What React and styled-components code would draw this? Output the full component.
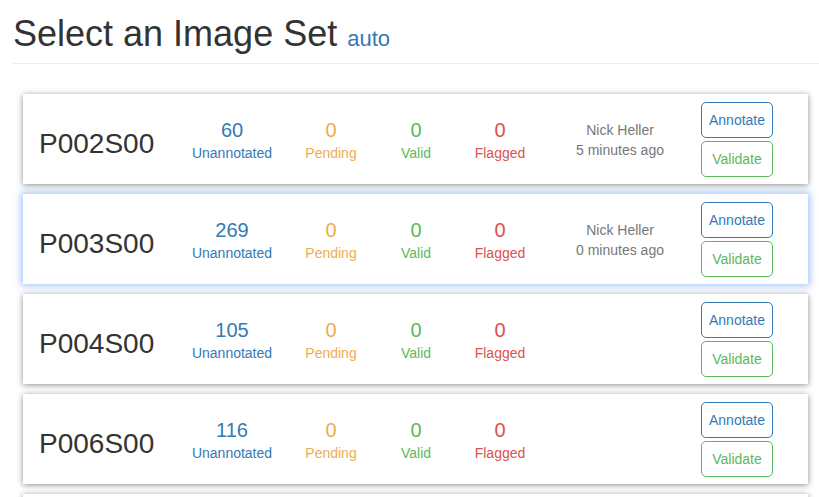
import React from "react";
import styled, { createGlobalStyle } from "styled-components";

const GlobalStyle = createGlobalStyle`
  body {
    margin: 0;
    background: #fff;
    font-family: "Liberation Sans", Arial, sans-serif;
    color: #333;
  }
`;

const colors = {
  blue: "#337ab7",
  orange: "#f0ad4e",
  green: "#5cb85c",
  red: "#d9534f",
};

const imageSets = [
  { name: "P002S00", unannotated: 60, pending: 0, valid: 0, flagged: 0, author: "Nick Heller", when: "5 minutes ago" },
  { name: "P003S00", unannotated: 269, pending: 0, valid: 0, flagged: 0, author: "Nick Heller", when: "0 minutes ago", active: true },
  { name: "P004S00", unannotated: 105, pending: 0, valid: 0, flagged: 0 },
  { name: "P006S00", unannotated: 116, pending: 0, valid: 0, flagged: 0 },
];

const ImageSetList = () => {
  return (
    <Page>
      <GlobalStyle />
      <PageHeader>
        <Title>
          Select an Image Set <Small>auto</Small>
        </Title>
      </PageHeader>
      <List>
        {imageSets.map((set) => (
          <Card key={set.name} $active={set.active}>
            <SetName>{set.name}</SetName>
            <Stat $color={colors.blue}>
              <Count>{set.unannotated}</Count>
              <Label>Unannotated</Label>
            </Stat>
            <Stat $color={colors.orange}>
              <Count>{set.pending}</Count>
              <Label>Pending</Label>
            </Stat>
            <Stat $color={colors.green}>
              <Count>{set.valid}</Count>
              <Label>Valid</Label>
            </Stat>
            <Stat $color={colors.red}>
              <Count>{set.flagged}</Count>
              <Label>Flagged</Label>
            </Stat>
            <Author>
              {set.author && (
                <>
                  <div>{set.author}</div>
                  <div>{set.when}</div>
                </>
              )}
            </Author>
            <Actions>
              <OutlineButton $color={colors.blue}>Annotate</OutlineButton>
              <OutlineButton $color={colors.green}>Validate</OutlineButton>
            </Actions>
          </Card>
        ))}
        {/* next card peeks in at the bottom edge */}
        <Card />
      </List>
    </Page>
  );
};

const Page = styled.div`
  padding: 0 0 0 13px;
  height: 497px;
  overflow: hidden;
`;

const PageHeader = styled.div`
  padding-bottom: 4px;
  margin: 14px 0 30px;
  border-bottom: 1px solid #eee;
`;

const Title = styled.h1`
  margin: 0;
  font-size: 36px;
  font-weight: 400;
  line-height: 40px;
  color: #333;
`;

const Small = styled.small`
  font-size: 22px;
  color: ${colors.blue};
`;

const List = styled.div`
  display: flex;
  flex-direction: column;
  gap: 10px;
  padding: 0 11px 0 10px;
`;

const Card = styled.div`
  display: grid;
  grid-template-columns: 143px 100px 98px 72px 96px 144px 72px;
  align-items: center;
  flex-shrink: 0;
  height: 90px;
  padding: 0 0 0 16px;
  background: #fff;
  box-shadow: ${(p) =>
    p.$active
      ? "0 0 7px 2px rgba(80, 140, 240, 0.5)"
      : "0 1px 6px rgba(0, 0, 0, 0.45)"};
`;

const SetName = styled.div`
  font-size: 28px;
  color: #333;
  padding-top: 10px;
`;

const Stat = styled.div`
  display: flex;
  flex-direction: column;
  align-items: center;
  color: ${(p) => p.$color};
  padding-top: 4px;
`;

const Count = styled.div`
  font-size: 20px;
  line-height: 22px;
`;

const Label = styled.div`
  font-size: 14px;
  line-height: 20px;
  margin-top: 2px;
`;

const Author = styled.div`
  text-align: center;
  font-size: 14px;
  line-height: 20px;
  color: #777;
  padding-top: 2px;
`;

const Actions = styled.div`
  display: flex;
  flex-direction: column;
  gap: 3px;
  margin-left: 9px;
`;

const OutlineButton = styled.button`
  width: 72px;
  height: 36px;
  padding: 0;
  font-family: "Liberation Sans", Arial, sans-serif;
  font-size: 14px;
  color: ${(p) => p.$color};
  background: #fff;
  border: 1px solid ${(p) => p.$color};
  border-radius: 5px;
  cursor: pointer;
`;

export default ImageSetList;
